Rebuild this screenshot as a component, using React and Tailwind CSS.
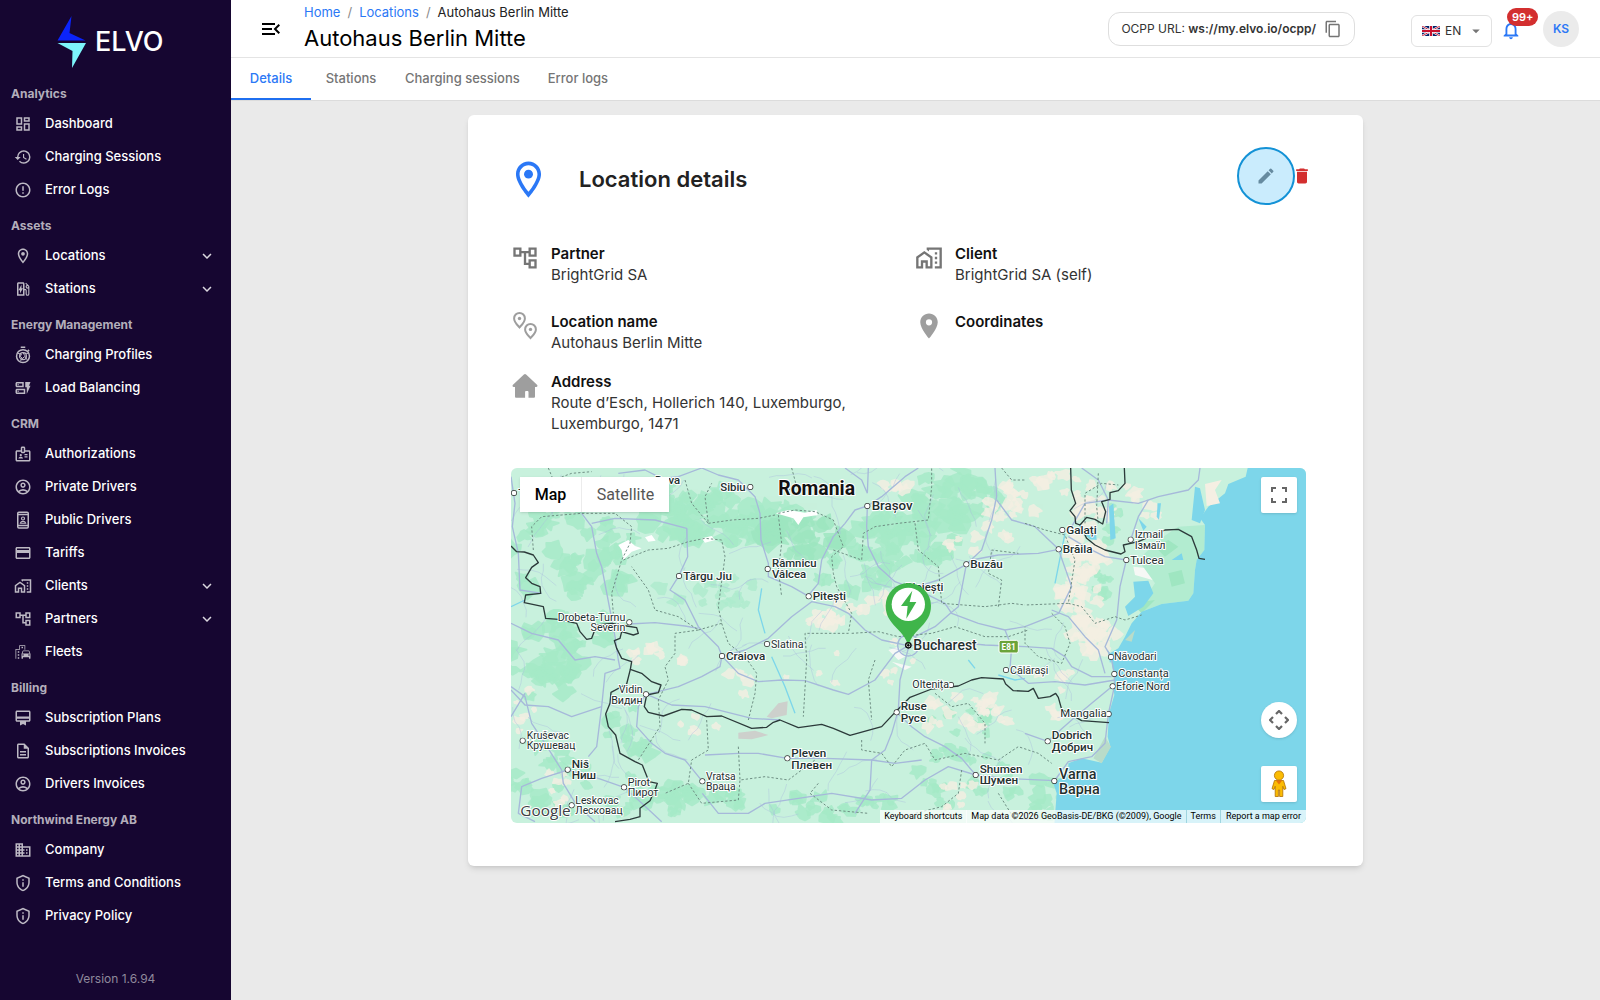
import React, { useState } from 'react';
import {
  MdOutlineDashboard, MdHistory, MdErrorOutline, MdExpandMore, MdOutlineEvStation,
  MdOutlineDynamicForm, MdOutlineBadge, MdOutlineAccountCircle, MdOutlineCreditCard,
  MdOutlineHomeWork, MdOutlineAccountTree, MdOutlineEmojiTransportation,
  MdOutlineCardMembership, MdOutlineDescription, MdOutlineBusiness, MdOutlinePrivacyTip,
  MdMenuOpen, MdContentCopy, MdNotificationsNone, MdEdit, MdDelete, MdPlace, MdArrowDropDown
} from 'react-icons/md';

function PinIcon({ size = 18, className }) {
  return (
    <svg width={size} height={size} viewBox="0 0 24 24" fill="currentColor" className={className}>
      <path d="M12 2C8.13 2 5 5.13 5 9c0 5.25 7 13 7 13s7-7.75 7-13c0-3.87-3.13-7-7-7zM7 9c0-2.76 2.24-5 5-5s5 2.24 5 5c0 2.88-2.88 7.19-5 9.88C9.92 16.21 7 11.85 7 9z" />
      <circle cx="12" cy="9" r="2.5" />
    </svg>
  );
}

function ProfileTimerIcon({ size = 18 }) {
  return (
    <svg width={size} height={size} viewBox="0 0 24 24" fill="none" stroke="currentColor" strokeWidth="2">
      <path d="M9 1.8h6M18.4 5.2l1.8 1.8" />
      <circle cx="12" cy="13.5" r="8.6" />
      <circle cx="12" cy="13.5" r="4.6" strokeWidth="1.5" />
      <path d="M12 9l2.5 4M16 13l-4 2.8M13 18l-3.5-3M8 15l2-4.5M4.5 9.5l5 1.5M19 10l-5-.5M17.5 18.5l-2.5-4M9 20l1-5" strokeWidth="1.3" />
    </svg>
  );
}

function KioskIcon({ size = 18 }) {
  return (
    <svg width={size} height={size} viewBox="0 0 24 24" fill="none" stroke="currentColor" strokeWidth="2">
      <rect x="5" y="1.5" width="14" height="21" rx="1.5" />
      <path d="M5 4.8h14M5 19.2h14" />
      <circle cx="12" cy="10" r="2" strokeWidth="1.6" />
      <path d="M8.4 16.2c.6-1.8 2-2.4 3.6-2.4s3 .6 3.6 2.4z" strokeWidth="1.4" />
    </svg>
  );
}

function TwoPinsIcon({ size = 28 }) {
  return (
    <svg width={size} height={size} viewBox="0 0 28 28" fill="none" stroke="currentColor" strokeWidth="2">
      <path d="M8.5 15.4C6 12.6 3.1 10 3.1 6.4a5.4 5.4 0 0 1 10.8 0c0 3.6-2.9 6.2-5.4 9z" />
      <path d="M19.5 26C17 23.2 14.1 21 14.1 17.4a5.4 5.4 0 0 1 10.8 0c0 3.6-2.9 5.8-5.4 8.6z" />
      <circle cx="8.5" cy="6.5" r="1.7" fill="currentColor" stroke="none" />
      <circle cx="19.5" cy="17.4" r="1.7" fill="currentColor" stroke="none" />
    </svg>
  );
}

function HouseIcon({ size = 28 }) {
  return (
    <svg width={size} height={size} viewBox="0 0 28 28" fill="currentColor">
      <path d="M12.9 2.4a1.6 1.6 0 0 1 2.2 0L26 12.7c1 1 .4 2.3-.8 2.3H24v9.5c0 .8-.5 1.3-1.3 1.3h-5.2v-5.6c0-.7-.4-1.1-1.1-1.1h-1.2c-.7 0-1.1.4-1.1 1.1v5.6H5.3c-.8 0-1.3-.5-1.3-1.3V15H2.8c-1.2 0-1.8-1.3-.8-2.3z" />
    </svg>
  );
}

const sections = [
  {
    title: 'Analytics',
    items: [
      { label: 'Dashboard', icon: MdOutlineDashboard },
      { label: 'Charging Sessions', icon: MdHistory },
      { label: 'Error Logs', icon: MdErrorOutline }
    ]
  },
  {
    title: 'Assets',
    items: [
      { label: 'Locations', icon: PinIcon, expandable: true },
      { label: 'Stations', icon: MdOutlineEvStation, expandable: true }
    ]
  },
  {
    title: 'Energy Management',
    items: [
      { label: 'Charging Profiles', icon: ProfileTimerIcon },
      { label: 'Load Balancing', icon: MdOutlineDynamicForm }
    ]
  },
  {
    title: 'CRM',
    items: [
      { label: 'Authorizations', icon: MdOutlineBadge },
      { label: 'Private Drivers', icon: MdOutlineAccountCircle },
      { label: 'Public Drivers', icon: KioskIcon },
      { label: 'Tariffs', icon: MdOutlineCreditCard },
      { label: 'Clients', icon: MdOutlineHomeWork, expandable: true },
      { label: 'Partners', icon: MdOutlineAccountTree, expandable: true },
      { label: 'Fleets', icon: MdOutlineEmojiTransportation }
    ]
  },
  {
    title: 'Billing',
    items: [
      { label: 'Subscription Plans', icon: MdOutlineCardMembership },
      { label: 'Subscriptions Invoices', icon: MdOutlineDescription },
      { label: 'Drivers Invoices', icon: MdOutlineAccountCircle }
    ]
  },
  {
    title: 'Northwind Energy AB',
    items: [
      { label: 'Company', icon: MdOutlineBusiness },
      { label: 'Terms and Conditions', icon: MdOutlinePrivacyTip },
      { label: 'Privacy Policy', icon: MdOutlinePrivacyTip }
    ]
  }
];

function Sidebar() {
  return (
    <aside className="flex w-[231px] shrink-0 flex-col bg-[#160631]">
      <a href="#" className="flex h-[81px] items-center gap-2 pt-[3px] pl-[57px] text-white">
        <svg width="30" height="52" viewBox="0 0 30 52">
          <path d="M14.5 0L12.5 17L28.5 24.5H.5z" fill="#0b24fb" />
          <path d="M.5 27H29L15 52L15.5 35z" fill="#7df5fb" />
        </svg>
        <span className="text-[27px] font-medium">ELVO</span>
      </a>

      <nav className="flex flex-col gap-[7px]">
        {sections.map((section) => (
          <div key={section.title}>
            <h2 className="pl-[11px] text-[12px] leading-[26px] font-bold text-[#b3aebb]">{section.title}</h2>
            <ul>
              {section.items.map(({ label, icon: Icon, expandable }) => (
                <li key={label}>
                  <a href="#" className="flex h-[33px] items-center pr-[15px] pl-[14px] text-[13px] font-medium text-white">
                    <span className="text-[#bdb9c4]"><Icon size={18} /></span>
                    <span className="ml-[13px] grow">{label}</span>
                    {expandable && <MdExpandMore size={18} className="text-[#dad7df]" />}
                  </a>
                </li>
              ))}
            </ul>
          </div>
        ))}
      </nav>

      <p className="mt-auto pb-[11px] text-center text-[12px] leading-5 text-[#8f899c]">Version 1.6.94</p>
    </aside>
  );
}

function FlagIcon() {
  return (
    <svg width="18" height="10" viewBox="0 0 60 33" preserveAspectRatio="none">
      <rect width="60" height="33" fill="#012169" />
      <path d="M0 0l60 33M60 0L0 33" stroke="#fff" strokeWidth="7" />
      <path d="M0 0l60 33M60 0L0 33" stroke="#c8102e" strokeWidth="3" />
      <path d="M30 0v33M0 16.5h60" stroke="#fff" strokeWidth="12" />
      <path d="M30 0v33M0 16.5h60" stroke="#c8102e" strokeWidth="7" />
    </svg>
  );
}

function Header() {
  return (
    <header className="flex h-[58px] items-center border-b border-[#e4e4e4] bg-white pr-[21px] pl-7">
      <button type="button" aria-label="Collapse menu" className="p-0">
        <MdMenuOpen size={24} className="text-black" />
      </button>

      <div className="ml-[21px] grow pb-[2px]">
        <nav aria-label="Breadcrumb" className="flex gap-[7px] text-[13px] leading-5 text-[#222222]">
          <a href="#" className="text-[#2b78f6]">Home</a>
          <span className="text-[#8a8a8a]">/</span>
          <a href="#" className="text-[#2b78f6]">Locations</a>
          <span className="text-[#8a8a8a]">/</span>
          <span>Autohaus Berlin Mitte</span>
        </nav>
        <h1 className="text-[22px] leading-8 text-black">Autohaus Berlin Mitte</h1>
      </div>

      <div className="flex h-[34px] items-center rounded-xl border border-[#dedede] px-3 text-[12px] text-[#333333]">
        <span>OCPP URL: <b className="font-semibold">ws://my.elvo.io/ocpp/</b></span>
        <button type="button" aria-label="Copy URL" className="ml-2">
          <MdContentCopy size={18} className="text-[#757575]" />
        </button>
      </div>

      <div className="relative mt-1 ml-[56px] flex h-8 w-[81px] items-center rounded-md border border-[#e2e2e2] pl-[10px]">
        <FlagIcon />
        <select aria-label="Language" className="absolute inset-0 cursor-pointer appearance-none bg-transparent pl-[33px] text-[12px] text-[#333333]">
          <option>EN</option>
          <option>DE</option>
        </select>
        <MdArrowDropDown size={18} className="absolute right-[6px] text-[#757575]" />
      </div>

      <button type="button" aria-label="Notifications" className="relative mt-[2px] ml-2">
        <MdNotificationsNone size={22} className="text-[#2b78f6]" />
        <span className="absolute -top-[11px] left-[7px] rounded-full bg-[#d32f2f] px-[5px] text-[11px] leading-[18px] font-semibold text-white">99+</span>
      </button>

      <button type="button" className="ml-[21px] h-9 w-9 rounded-full bg-[#ebebeb] text-[12px] font-semibold text-[#2b78f6]">KS</button>
    </header>
  );
}

const tabs = ['Details', 'Stations', 'Charging sessions', 'Error logs'];

function Tabs() {
  const [active, setActive] = useState('Details');

  return (
    <div role="tablist" className="flex h-[43px] border-b border-[#dcdcdc] bg-white text-[13px] font-medium">
      {tabs.map((tab) => (
        <button
          key={tab}
          type="button"
          role="tab"
          aria-selected={tab === active}
          onClick={() => setActive(tab)}
          className={
            tab === active
              ? 'min-w-20 border-b-2 border-[#1f6ff0] px-[14px] pt-[2px] text-[#2b78f6]'
              : 'min-w-20 border-b-2 border-transparent px-[14px] pt-[2px] text-[#757575]'
          }
        >
          {tab}
        </button>
      ))}
    </div>
  );
}

// [x, y, lines, size, weight, dot x, dot y, anchor]
const places = [
  [450, 72, ['Deva'], 34, 500, 440, 60],
  [40, 110, ['T'], 34, 500, 27, 99],
  [722, 92, ['Sibiu'], 34, 500, 736, 81, 'end'],
  [535, 360, ['Târgu Jiu'], 35, 500, 522, 348],
  [361, 482, ['Drobeta-Turnu', 'Severin'], 32, 400, 373, 487, 'end'],
  [663, 600, ['Craiova'], 35, 500, 651, 588],
  [413, 699, ['Vidin', 'Видин'], 32, 400, 423, 703, 'end'],
  [65, 837, ['Kruševac', 'Крушевац'], 31, 400, 53, 842],
  [200, 923, ['Niš', 'Ниш'], 35, 500, 188, 929],
  [368, 977, ['Pirot', 'Пирот'], 32, 400, 357, 982],
  [211, 1031, ['Leskovac', 'Лесковац'], 31, 400, 200, 1036],
  [603, 960, ['Vratsa', 'Враца'], 31, 400, 592, 964],
  [1100, 150, ['Brașov'], 40, 500, 1087, 138],
  [801, 320, ['Râmnicu', 'Vâlcea'], 34, 500, 788, 327],
  [1396, 325, ['Buzău'], 35, 500, 1384, 313],
  [923, 420, ['Pitești'], 35, 500, 911, 409],
  [1315, 393, ['Ploiești'], 34, 500, 1200, 380, 'end'],
  [798, 564, ['Slatina'], 32, 400, 786, 552],
  [1225, 570, ['Bucharest'], 42, 500, 1210, 556],
  [1515, 642, ['Călărași'], 32, 400, 1503, 630],
  [1222, 683, ['Oltenița'], 32, 400, 1338, 675],
  [1187, 750, ['Ruse', 'Русе'], 35, 500, 1175, 757],
  [859, 891, ['Pleven', 'Плевен'], 35, 500, 847, 895],
  [1424, 938, ['Shumen', 'Шумен'], 35, 500, 1412, 945],
  [1684, 221, ['Galați'], 35, 500, 1672, 210],
  [1673, 279, ['Brăila'], 35, 500, 1661, 268],
  [1889, 234, ['Izmail', 'Ізмаїл'], 32, 400, 1877, 239],
  [1876, 311, ['Tulcea'], 34, 400, 1864, 300],
  [1827, 601, ['Năvodari'], 32, 400, 1818, 591],
  [1840, 652, ['Constanța'], 33, 400, 1828, 642],
  [1833, 690, ['Eforie Nord'], 32, 400, 1823, 679],
  [1805, 772, ['Mangalia'], 34, 400, 1811, 762, 'end'],
  [1640, 837, ['Dobrich', 'Добрич'], 35, 500, 1628, 844],
  [1662, 958, ['Varna', 'Варна'], 43, 500, 1648, 963]
];

// [cx, cy, rx, ry, count, blob size, colour]
const patches = [
  [200, 260, 190, 170, 42, 44, '#a5eac7'],
  [120, 590, 120, 130, 26, 44, '#a5eac7'],
  [240, 520, 120, 60, 14, 40, '#a5eac7'],
  [130, 960, 130, 110, 22, 34, '#a5eac7'],
  [360, 900, 70, 170, 18, 36, '#a5eac7'],
  [650, 180, 240, 70, 46, 46, '#a5eac7'],
  [560, 90, 130, 60, 14, 36, '#a5eac7'],
  [900, 230, 130, 60, 26, 46, '#9de6c0'],
  [1200, 230, 190, 80, 36, 46, '#a5eac7'],
  [1340, 120, 150, 90, 24, 50, '#a5eac7'],
  [1040, 330, 120, 70, 16, 34, '#a5eac7'],
  [620, 400, 180, 50, 16, 26, '#aeecce'],
  [560, 1020, 180, 50, 24, 36, '#a5eac7'],
  [1000, 1040, 200, 40, 20, 32, '#a5eac7'],
  [1340, 960, 170, 100, 24, 30, '#a5eac7'],
  [1380, 770, 120, 60, 14, 20, '#a5eac7'],
  [1590, 1010, 90, 60, 12, 34, '#a5eac7'],
  [1780, 380, 50, 40, 8, 24, '#a5eac7'],
  [460, 590, 80, 26, 8, 28, '#f5efe3'],
  [60, 760, 40, 80, 6, 18, '#f5efe3'],
  [160, 960, 30, 90, 7, 20, '#f5efe3'],
  [700, 660, 30, 50, 4, 22, '#f5efe3'],
  [590, 790, 110, 30, 5, 20, '#f5efe3'],
  [980, 470, 80, 50, 12, 28, '#f5efe3'],
  [1130, 440, 70, 40, 8, 24, '#f5efe3'],
  [1180, 60, 50, 40, 6, 22, '#f5efe3'],
  [1380, 250, 60, 40, 5, 24, '#f5efe3'],
  [1500, 160, 60, 90, 12, 26, '#f5efe3'],
  [1380, 760, 150, 60, 24, 24, '#f5efe3'],
  [1350, 980, 60, 70, 8, 20, '#f5efe3'],
  [1010, 600, 220, 110, 9, 14, '#f5efe3'],
  [1650, 110, 140, 70, 18, 26, '#f5efe3'],
  [1850, 130, 130, 60, 18, 28, '#f5efe3'],
  [1730, 340, 70, 160, 44, 36, '#f5efe3'],
  [1760, 520, 70, 60, 18, 34, '#f5efe3'],
  [1660, 700, 90, 80, 9, 20, '#f5efe3'],
  [1790, 190, 60, 60, 6, 20, '#a5eac7']
];

function createRandom(seed) {
  let s = seed;
  return () => {
    s = (s * 16807) % 2147483647;
    return s / 2147483647;
  };
}

function buildBlobs() {
  const random = createRandom(4207);
  const blobs = [];
  patches.forEach(([cx, cy, rx, ry, count, size, fill]) => {
    for (let i = 0; i < count; i++) {
      const a = random() * Math.PI * 2;
      const d = Math.sqrt(random());
      const x = cx + Math.cos(a) * rx * d;
      const y = cy + Math.sin(a) * ry * d;
      const r = size * (0.4 + random() * 0.7);
      const points = [];
      for (let k = 0; k < 11; k++) {
        const t = (k / 11) * Math.PI * 2;
        const q = r * (0.35 + random() * 0.75);
        points.push(`${Math.round(x + Math.cos(t) * q)},${Math.round(y + Math.sin(t) * q * 0.8)}`);
      }
      blobs.push({ points: points.join(' '), fill });
    }
  });
  return blobs;
}

function buildLanes() {
  const random = createRandom(977);
  const lanes = [];
  for (let i = 0; i < 110; i++) {
    let x = 20 + random() * 1700;
    let y = 30 + random() * 1050;
    let angle = random() * Math.PI * 2;
    let d = `M${Math.round(x)} ${Math.round(y)}`;
    for (let k = 0; k < 6; k++) {
      angle += (random() - 0.5) * 1.1;
      x += Math.cos(angle) * 22;
      y += Math.sin(angle) * 22;
      d += `L${Math.round(x)} ${Math.round(y)}`;
    }
    lanes.push(d);
  }
  return lanes;
}

const blobs = buildBlobs();
const lanes = buildLanes();

const roads = [
  'M18 50L30 130L22 200L40 280L45 390L110 400',
  'M340 40L420 30L470 55L520 50L590 24L640 45L700 60L750 110L765 160L768 240L790 310L790 350L860 380L911 409',
  'M230 160L260 200L275 280L290 320L315 450L330 530L340 600L345 625L300 640L290 740L275 860L250 890',
  'M260 190L330 175L450 180L545 205L548 290L520 350L495 390L540 420L580 500L640 560L651 588L645 620L590 650L520 680L425 703',
  'M373 492L450 488L540 498L580 505',
  'M651 588L700 640L760 665L830 660L900 662L985 690L1030 703L1110 660L1170 580L1205 560',
  'M651 590L720 570L790 535L860 470L920 425L990 440L1030 460L1080 510L1130 540L1205 556',
  'M911 405L940 370L950 300L985 230L1020 190L1050 150L1087 138L1130 110L1200 50L1240 24',
  'M1087 140L1085 200L1090 260L1120 320L1170 365L1210 380',
  'M1087 100L1070 60L1020 24M1087 100L1090 24',
  'M1205 380L1260 400L1320 430L1340 460L1420 490L1500 510L1560 500L1661 460L1700 380L1661 270',
  'M1220 385L1300 360L1384 313L1430 270L1460 180L1475 110L1470 24',
  'M1384 313L1360 440L1338 458L1290 500L1230 530',
  'M1475 120L1520 180L1590 200L1661 268L1600 280L1480 285L1400 300',
  'M1210 556L1290 558L1390 550L1440 555L1560 560L1640 565L1680 590L1700 620L1760 650L1820 650',
  'M1210 565L1185 660L1180 750L1160 820L1140 870L1100 900L1095 990L1050 1060',
  'M1175 757L1220 800L1260 830L1320 860L1370 895L1412 945L1500 955L1648 962',
  'M1412 945L1330 920L1260 960L1190 1015L1100 1020L980 1000L780 1030L730 1060L640 1060L592 1000',
  'M592 964L540 900L480 880L440 850L395 800L400 740L423 703',
  'M847 895L760 880L700 880L600 885M847 895L960 895L1100 900L1170 910L1250 900',
  'M18 680L60 710L80 790L120 850L170 930L175 970L215 1036L270 1085',
  'M188 930L280 955L357 982L400 1020L470 1085',
  'M18 770L60 700M90 1085L40 1060L50 980L110 955L188 930',
  'M1648 963L1690 905L1760 890L1800 850L1810 762L1828 680L1828 640L1818 590L1800 560L1835 480L1845 380L1864 300L1800 290L1740 260L1690 230',
  'M1628 844L1700 780L1760 730L1820 680M1628 844L1560 820',
  'M1640 450L1690 470L1740 530L1780 570L1800 640',
  'M1700 200L1740 130L1810 120L1900 130L1960 110L2050 90L2080 60L2085 24',
  'M1877 239L1900 170L1930 120M1730 24L1780 60L1810 120L1805 190',
  'M1500 510L1520 560L1515 625L1570 670L1650 665L1740 675L1830 660',
  'M330 600L270 590L210 600L160 540L80 520L18 490',
  'M290 740L200 770L130 740L60 735L18 690',
  'M425 703L500 735L600 740L740 775L825 780'
];

const counties = [
  'M130 24L145 60L200 40L260 35M85 270L80 200L110 170L230 160L330 160L380 200L375 250L350 300L320 400L325 460',
  'M540 60L560 130L610 190L600 110L620 70M610 190L680 180L760 175L810 165',
  'M355 300L430 270L490 265L550 245L600 235L650 240L660 290L640 440L650 490L580 510L520 470L450 450L430 390L380 320',
  'M580 510L510 520L510 580L480 620L490 660L460 720L465 800L400 900',
  'M650 490L670 550L720 590L755 640L750 700L730 780M605 780L610 870L560 900L550 970L480 1000',
  'M550 970L590 1030L700 1020L705 960L780 950L850 960L930 900M700 860L705 960',
  'M820 165L830 250L820 330L830 410M820 160L870 150L930 155L985 180L1015 260L980 290L985 340L995 380L1040 460L1030 520L900 520L905 600L895 770',
  'M985 270L1070 300L1075 220L1110 200L1180 190L1270 180L1280 80L1280 24M1230 190L1240 270L1300 320L1310 430L1440 440L1520 430L1560 435',
  'M1040 520L1120 515L1180 530L1280 520L1350 500L1440 530L1510 530L1570 510M1110 600L1090 660L1100 780M1480 440L1490 360L1450 340L1460 270L1540 280',
  'M1490 24L1520 60L1560 60M1560 190L1620 210L1680 225L1710 300L1690 430L1560 435M1690 430L1730 440L1770 490L1830 470L1860 480L1910 465',
  'M1640 460L1680 500L1695 550L1670 610L1600 590L1560 550L1560 500',
  'M1070 840L1070 870L1130 880L1160 920L1200 870L1260 850L1290 900L1380 880L1480 900L1540 860L1600 880L1640 910',
  'M1290 700L1340 740L1390 730L1440 790L1440 850M1370 930L1360 1000L1310 1040L1230 1060M940 970L915 1000L980 1050L1090 1060M1480 1000L1530 1080',
  'M1740 190L1740 100L1790 70L1840 75M1780 40L1775 140L1780 190M860 24L875 80L850 90'
];

const borders = [
  'M18 258L35 275L58 276L85 285L100 308L80 322L62 353L80 370L105 380L107 400L62 405L58 428L115 440L122 475L160 478L215 490L225 515L245 538L260 535L275 495L320 490L365 498L395 503L400 520L385 525L350 515L345 535L328 542L335 565L350 595L380 605L376 628L410 640L440 665L468 675L460 698L425 705L418 740L430 757L475 768L530 748L560 750L605 770L650 768L740 805L785 802L805 787L825 780L880 803L950 793L985 805L1035 826L1100 808L1130 800L1175 752L1215 712L1280 687L1360 678L1400 660L1430 653L1495 657L1502 672L1525 692L1570 694L1585 685L1600 715L1635 710L1652 700L1660 712L1670 748L1730 782L1812 788',
  'M376 628L365 672L318 697L315 730L302 762L310 800L332 825L345 880L390 905L412 915L432 965L457 970L450 990L435 1022L405 1045L405 1070L375 1078L330 1085',
  'M1697 24L1699 90L1712 130L1695 152L1710 170L1712 190L1725 195L1745 172L1770 178L1793 192L1802 155L1790 125L1815 118L1815 98L1840 92L1860 70L1858 24',
  'M1725 195L1745 235L1770 255L1800 270L1848 282L1860 275L1855 255L1900 245L1980 210L2020 208L2060 230L2075 270L2082 295L2100 298'
];

function RegionMap() {
  return (
    <svg viewBox="18 24 2385 1065" preserveAspectRatio="xMidYMid slice" className="block h-full w-full font-[Roboto]">
      <rect x="0" y="0" width="2420" height="1110" fill="#c8f1dd" />
      {/* Terrain */}
      {blobs.map((blob, i) => (
        <polygon key={i} points={blob.points} fill={blob.fill} stroke={blob.fill} strokeWidth="6" strokeLinejoin="round" opacity="0.8" />
      ))}
      <path d="M340 255L370 240L390 258L410 265L380 275L355 300L350 270zM420 232L440 225L452 242L430 245zM590 235L620 228L630 240L600 248zM812 160L850 150L900 158L935 150L938 165L895 172L880 195L865 175z" fill="#fff" />
      <path d="M1150 570L1180 560L1200 590L1180 600zM1160 605L1220 620L1200 630zM1885 320L1930 325L1972 355L1950 362L1890 345z" fill="#f6f8f5" />
      <path d="M700 818L750 812L790 825L740 838L700 836zM785 770L820 730L848 724L845 765L800 775z" fill="#cdd0cc" />

      {/* Delta and sea */}
      <path d="M1900 300L1960 240L2020 200L2100 195L2098 270L2075 300L2070 330L2065 400L2050 422L1970 432L1910 455L1930 400L1950 370z" fill="#b2ecd0" />
      <path d="M1950 260L1990 240L2020 260L1980 290zM1990 340L2030 330L2040 370L2000 380zM1880 430L1950 420L1910 460z" fill="#9fe6c1" />
      <path d="M2228 24L2222 50L2170 72L2160 100L2110 140L2085 175L2100 195L2098 270L2075 300L2070 330L2065 400L2050 422L1970 432L1910 455L1880 490L1860 530L1840 565L1815 580L1822 620L1828 650L1826 690L1828 705L1812 760L1808 830L1816 860L1790 908L1730 895L1690 910L1690 940L1645 970L1655 1000L1648 1095L2420 1095L2420 20z" fill="#7dd6ea" />
      <path d="M2070 80L2085 85L2100 150L2085 190L2060 180zM1885 365L1930 362L1945 400L1915 440L1870 468L1860 440L1890 410zM1812 140L1825 130L1832 235L1816 240zM1958 130L1968 130L1962 180L1955 170zM1735 220L1772 210L1775 240L1755 238zM1900 175L1925 200L1915 212zM1925 300L1950 290L1960 305zM2000 300L2030 280L2035 300zM1808 570L1825 590L1815 610z" fill="#7dd6ea" />
      <path d="M2100 72L2150 60L2130 90L2145 130L2105 138z" fill="#f5efe3" />
      <path d="M1860 540L1890 510L1880 545zM1800 830L1818 860L1790 910L1765 895z" fill="#b9dcc9" />
      <path d="M18 440L60 420M1480 645L1530 660L1560 655M770 385L760 450L780 520M800 590L840 680L870 760M1650 370L1660 320L1680 220M1390 600L1410 625" fill="none" stroke="#7dd6ea" strokeWidth="4" />

      {/* Roads and boundaries */}
      {lanes.map((d, i) => <path key={i} d={d} fill="none" stroke="#a9bbdd" strokeWidth="2" opacity="0.6" />)}
      {roads.map((d) => <path key={d} d={d} fill="none" stroke="#a6b9da" strokeWidth="4" strokeLinejoin="round" />)}
      <circle cx="1210" cy="556" r="32" fill="none" stroke="#a6b9da" strokeWidth="4" />
      {counties.map((d) => <path key={d} d={d} fill="none" stroke="#6f8f84" strokeWidth="3" strokeDasharray="7 6" />)}
      {borders.map((d) => <path key={d} d={d} fill="none" stroke="#2c3a3a" strokeWidth="4" strokeLinejoin="round" />)}

      {/* Labels */}
      <g fill="#23302f" stroke="#fff" strokeWidth="6" strokeLinejoin="round" className="[paint-order:stroke]">
        {places.map(([x, y, lines, size, weight, dotX, dotY, anchor]) => (
          <g key={lines[0]}>
            <circle cx={dotX} cy={dotY} r="7" fill="#fff" stroke="#333" strokeWidth="4" />
            {lines.map((line, i) => (
              <text key={line} x={x} y={y + i * size} fontSize={size} fontWeight={weight} textAnchor={anchor || 'start'}>{line}</text>
            ))}
          </g>
        ))}
        <text x="820" y="104" fontSize="58" fontWeight="700" fill="#111">Romania</text>
        <text x="46" y="1068" fontSize="46" fontWeight="500" fill="#3c4043" className="font-['Open_Sans']">Google</text>
      </g>
      <rect x="1482" y="541" width="58" height="38" rx="6" fill="#6ba43a" stroke="#fff" strokeWidth="3" />
      <text x="1511" y="569" fontSize="25" fontWeight="700" fill="#fff" textAnchor="middle">E81</text>

      {/* Station marker */}
      <path d="M1210 556C1195 505 1142 495 1142 437a68 68 0 0 1 136 0C1278 495 1225 505 1210 556z" fill="#3fb54a" />
      <circle cx="1210" cy="433" r="50" fill="#fff" />
      <path d="M1222 392L1188 438H1208L1204 476L1234 426H1214z" fill="#3fb54a" />
      <circle cx="1210" cy="556" r="8" fill="none" stroke="#111" strokeWidth="4" />
      <circle cx="1210" cy="556" r="4" fill="#111" />
    </svg>
  );
}

function MapPanel() {
  return (
    <div className="relative mt-[34px] h-[355px] overflow-hidden rounded-md font-[Roboto]">
      <RegionMap />

      <div className="absolute top-[9px] left-[9px] flex h-[35px] bg-white text-[16px] shadow-sm">
        <button type="button" className="w-[62px] border-r border-[#ececec] font-medium text-black">Map</button>
        <button type="button" className="w-[87px] text-[#565656]">Satellite</button>
      </div>

      <button type="button" aria-label="Toggle fullscreen" className="absolute top-[9px] right-[9px] flex h-9 w-9 items-center justify-center rounded-xs bg-white shadow-sm">
        <svg width="16" height="16" viewBox="0 0 16 16" fill="none" stroke="#666" strokeWidth="2">
          <path d="M1 5V1h4M11 1h4v4M15 11v4h-4M5 15H1v-4" />
        </svg>
      </button>

      <button type="button" aria-label="Map camera controls" className="absolute right-[9px] bottom-[85px] flex h-9 w-9 items-center justify-center rounded-full bg-white shadow-sm">
        <svg width="20" height="20" viewBox="0 0 20 20" fill="none" stroke="#666" strokeWidth="2.2">
          <path d="M7 4l3-3 3 3M7 16l3 3 3-3M4 7l-3 3 3 3M16 7l3 3-3 3" />
        </svg>
      </button>

      <button type="button" aria-label="Street View" className="absolute right-[9px] bottom-[21px] flex h-9 w-9 items-center justify-center rounded-xs bg-white shadow-sm">
        <svg width="16" height="28" viewBox="0 0 16 28">
          <path d="M3.5 10.5h9l2.5 8.2-2 .8-1.2-3.2V26.5H8.6V20H7.4v6.5H4.2V16.3L3 19.5l-2-.8z" fill="#fbbc04" stroke="#b06f00" strokeWidth=".8" />
          <circle cx="8" cy="5.5" r="4.6" fill="#fbbc04" stroke="#b06f00" strokeWidth=".8" />
          <path d="M4.8 10.5L8 14.5l3.2-4z" fill="#e8710a" />
        </svg>
      </button>

      <div className="absolute right-0 bottom-0 flex bg-white/70 text-[9px] leading-[13px] text-black">
        <button type="button" className="px-1">Keyboard shortcuts</button>
        <span className="border-l border-white/60 px-1">Map data ©2026 GeoBasis-DE/BKG (©2009), Google</span>
        <a href="#" className="border-l border-[#9fd5e0] px-1">Terms</a>
        <a href="#" className="border-l border-[#9fd5e0] px-[5px]">Report a map error</a>
      </div>
    </div>
  );
}

function Field({ icon, label, children }) {
  return (
    <div className="flex gap-3 text-[15px] leading-[21px]">
      <span className="flex h-[30px] w-[28px] shrink-0 items-center justify-center">{icon}</span>
      <div className="max-w-[310px]">
        <dt className="font-semibold text-[#111111]">{label}</dt>
        <dd className="text-[#333333]">{children}</dd>
      </div>
    </div>
  );
}

function LocationCard() {
  return (
    <section className="mx-auto w-full max-w-[895px] rounded-md bg-white pt-8 pr-[57px] pb-[43px] pl-[43px] shadow-md">
      <div className="-mr-[2px] flex h-[58px] items-center">
        <PinIcon size={43} className="-ml-1 mt-[6px] text-[#2b78f6]" />
        <h2 className="ml-[29px] grow pt-[6px] text-[22px] font-semibold text-[#222222]">Location details</h2>
        <button type="button" aria-label="Edit location" className="flex h-[58px] w-[58px] items-center justify-center rounded-full border-2 border-[#1492d6] bg-[#caecfd]">
          <MdEdit size={20} className="text-[#668ba0]" />
        </button>
        <button type="button" aria-label="Delete location" className="-mr-1">
          <MdDelete size={20} className="-ml-[3px] text-[#d32f2f]" />
        </button>
      </div>

      <dl className="mt-[38px] grid grid-cols-[404px_1fr]">
        <div className="h-[68px]">
          <Field icon={<MdOutlineAccountTree size={28} className="text-[#757575]" />} label="Partner">BrightGrid SA</Field>
        </div>
        <Field icon={<MdOutlineHomeWork size={28} className="text-[#757575]" />} label="Client">BrightGrid SA (self)</Field>
        <div className="h-[60px]">
          <Field icon={<span className="text-[#9e9e9e]"><TwoPinsIcon /></span>} label="Location name">Autohaus Berlin Mitte</Field>
        </div>
        <Field icon={<MdPlace size={30} className="shrink-0 text-[#9e9e9e]" />} label="Coordinates" />
        <Field icon={<span className="text-[#9e9e9e]"><HouseIcon /></span>} label="Address">
          Route d’Esch, Hollerich 140, Luxemburgo, Luxemburgo, 1471
        </Field>
      </dl>

      <MapPanel />
    </section>
  );
}

export default function App() {
  return (
    <div className="flex min-h-screen bg-[#eaeaea] font-[Inter,sans-serif]">
      <Sidebar />
      <div className="flex min-w-0 grow flex-col">
        <Header />
        <Tabs />
        <main className="px-6 pt-[14px] pb-6">
          <LocationCard />
        </main>
      </div>
    </div>
  );
}
